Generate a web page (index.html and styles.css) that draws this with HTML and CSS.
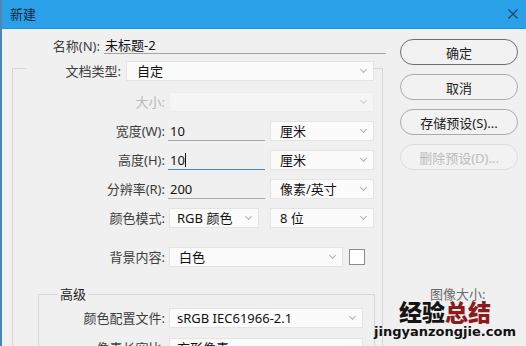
FILE: index.html
```html
<!DOCTYPE html>
<html lang="zh-CN">
<head>
    <meta charset="UTF-8">
    <meta name="viewport" content="width=device-width, initial-scale=1.0">
    <title>新建</title>
    <link rel="stylesheet" href="styles.css">
</head>
<body>
    <div class="window">
        <div class="titlebar">
            <span class="title">新建</span>
            <svg class="close" width="10" height="10" viewBox="0 0 10 10">
                <path d="M0.5 0.5 L9.5 9.5 M9.5 0.5 L0.5 9.5" />
            </svg>
        </div>

        <div class="body">
            <div class="form">
                <div class="name-row">
                    <span class="label">名称(N):</span>
                    <div class="textfield">未标题-2</div>
                </div>

                <fieldset class="group preset">
                    <legend>
                        <span class="label">文档类型:</span>
                        <div class="select wide">自定</div>
                    </legend>

                    <div class="row first">
                        <span class="label disabled">大小:</span>
                        <div class="select full disabled"></div>
                    </div>
                    <div class="row">
                        <span class="label">宽度(W):</span>
                        <div class="textfield num">10</div>
                        <div class="select unit">厘米</div>
                    </div>
                    <div class="row">
                        <span class="label">高度(H):</span>
                        <div class="textfield num focused">10<span class="caret"></span></div>
                        <div class="select unit">厘米</div>
                    </div>
                    <div class="row">
                        <span class="label">分辨率(R):</span>
                        <div class="textfield num">200</div>
                        <div class="select unit">像素/英寸</div>
                    </div>
                    <div class="row">
                        <span class="label">颜色模式:</span>
                        <div class="select mode">RGB 颜色</div>
                        <div class="select unit">8 位</div>
                    </div>
                    <div class="row bg-row">
                        <span class="label">背景内容:</span>
                        <div class="select bg">白色</div>
                        <div class="swatch"></div>
                    </div>

                    <fieldset class="group advanced">
                        <legend>高级</legend>
                        <div class="row first">
                            <span class="label">颜色配置文件:</span>
                            <div class="select profile">sRGB IEC61966-2.1</div>
                        </div>
                        <div class="row">
                            <span class="label">像素长宽比:</span>
                            <div class="select profile">方形像素</div>
                        </div>
                    </fieldset>
                </fieldset>
            </div>

            <div class="actions">
                <button class="btn primary">确定</button>
                <button class="btn">取消</button>
                <button class="btn">存储预设(S)...</button>
                <button class="btn" disabled>删除预设(D)...</button>
                <div class="image-size">图像大小:</div>
            </div>

            <div class="watermark">
                <div class="wm-title">经验<span class="red">总结</span></div>
                <div class="wm-url">jingyanzongjie.com</div>
            </div>
        </div>
    </div>
</body>
</html>
```

FILE: styles.css
```css
* {
    box-sizing: border-box;
}

body {
    margin: 0;
    width: 526px;
    height: 346px;
    overflow: hidden;
    background: #f0f0f0;
    font-family: "Noto Sans", "Noto Sans CJK SC", sans-serif;
    font-size: 13px;
    line-height: 1;
    color: #333;
}

.window {
    height: 346px;
    border-left: 2px solid #4a87b5;
    display: flex;
    flex-direction: column;
}

.titlebar {
    height: 29px;
    flex-shrink: 0;
    background: #2aa0e8;
    border-bottom: 1px solid #2393d8;
    display: flex;
    align-items: center;
    justify-content: space-between;
    padding: 0 8px 0 8px;
    color: #13283a;
}

.close {
    stroke: #1d3f5c;
    stroke-width: 1.1;
    fill: none;
}

.body {
    flex: 1;
    display: flex;
    padding-left: 10px;
    position: relative;
    overflow: hidden;
}

.form {
    width: 376px;
    flex-shrink: 0;
}

.label {
    text-align: right;
    flex-shrink: 0;
    color: #3d3d3d;
    white-space: nowrap;
}

.label.disabled {
    color: #b8b8b8;
}

.name-row {
    display: flex;
    align-items: center;
    height: 16px;
    margin-top: 9px;
}

.name-row .label {
    width: 88px;
    margin-right: 4px;
}

.textfield {
    width: 282px;
    height: 16px;
    line-height: 15px;
    border-bottom: 1px solid #a3a3a3;
    padding-left: 1px;
    color: #111;
    flex-shrink: 0;
}

.select {
    height: 20px;
    flex-shrink: 0;
    display: flex;
    align-items: center;
    padding-left: 9px;
    background: #fbfbfb;
    border: 1px solid #e4e4e4;
    color: #111;
    white-space: nowrap;
}

.select::after {
    content: "";
    width: 4px;
    height: 4px;
    margin-left: auto;
    border-right: 1px solid #b0b0b0;
    border-bottom: 1px solid #b0b0b0;
    transform: rotate(45deg);
    margin-right: 7px;
    margin-top: -3px;
}

.select.disabled {
    background: #f5f5f5;
    border-color: #ececec;
}

.select.disabled::after {
    border-color: #d0d0d0;
}

.group {
    margin: 0;
    border: 1px solid #d6d6d6;
}

.preset {
    margin-top: 7px;
    width: 370px;
    height: 320px;
    padding: 16px 7px 0 14px;
}

.preset > legend {
    padding: 0;
    height: 15px;
    display: flex;
    align-items: flex-start;
}

.preset > legend .label {
    width: 94px;
    margin-right: 5px;
    line-height: 20px;
}

.select.wide {
    width: 248px;
    padding-left: 10px;
}

.row {
    display: flex;
    align-items: center;
    height: 20px;
    margin-top: 9px;
}

.row.first {
    margin-top: 0;
}

.row .label {
    width: 138px;
    margin-right: 4px;
}

.select.full {
    width: 205px;
}

.textfield.num {
    width: 97px;
    height: 19px;
    line-height: 18px;
    margin-left: -1px;
    margin-right: 5px;
    padding-left: 2px;
    border-bottom-color: #a8a8a8;
}

.textfield.focused {
    border-bottom-color: #4f86c0;
}

.caret {
    display: inline-block;
    width: 1px;
    height: 14px;
    background: #111;
    vertical-align: -2px;
}

.select.unit {
    width: 104px;
}

.select.mode {
    width: 90px;
    margin-right: 11px;
    padding-left: 7px;
}

.bg-row {
    margin-top: 19px;
}

.select.bg {
    width: 174px;
}

.swatch {
    width: 16px;
    height: 16px;
    margin-left: 6px;
    background: #fff;
    border: 1px solid #8a8a8a;
}

.advanced {
    margin: 18px 0 0 11px;
    width: 337px;
    height: 120px;
    padding: 5px 11px 0 19px;
}

.advanced > legend {
    padding: 0 2px;
    line-height: 18px;
    color: #222;
}

.advanced .row {
    margin-top: 10px;
}

.advanced .row.first {
    margin-top: 0;
}

.advanced .label {
    width: 107px;
}

.select.profile {
    width: 194px;
    padding-left: 7px;
}

.actions {
    width: 118px;
    margin-left: 12px;
    padding-top: 10px;
    display: flex;
    flex-direction: column;
    gap: 9px;
}

.btn {
    height: 26px;
    border: 1px solid #ababab;
    border-radius: 13px;
    background: #f2f2f2;
    font-family: inherit;
    font-size: 13px;
    color: #222;
    padding: 0;
}

.btn.primary {
    border-color: #6f6f6f;
}

.btn:disabled {
    color: #bcbcbc;
    border-color: #dddddd;
}

.image-size {
    margin-top: 109px;
    padding-left: 30px;
    color: #6a6a6a;
}

.watermark {
    position: absolute;
    left: 368px;
    top: 270px;
    width: 150px;
    text-align: center;
}

.wm-title {
    font-family: "Noto Sans CJK SC", sans-serif;
    font-size: 23px;
    font-weight: 900;
    line-height: 24px;
    color: #151515;
}

.wm-title .red {
    color: #8c1c1c;
}

.wm-url {
    font-family: "DejaVu Sans", sans-serif;
    font-weight: bold;
    font-size: 13px;
    line-height: 16px;
    margin-top: 1px;
    color: #111;
}
```
